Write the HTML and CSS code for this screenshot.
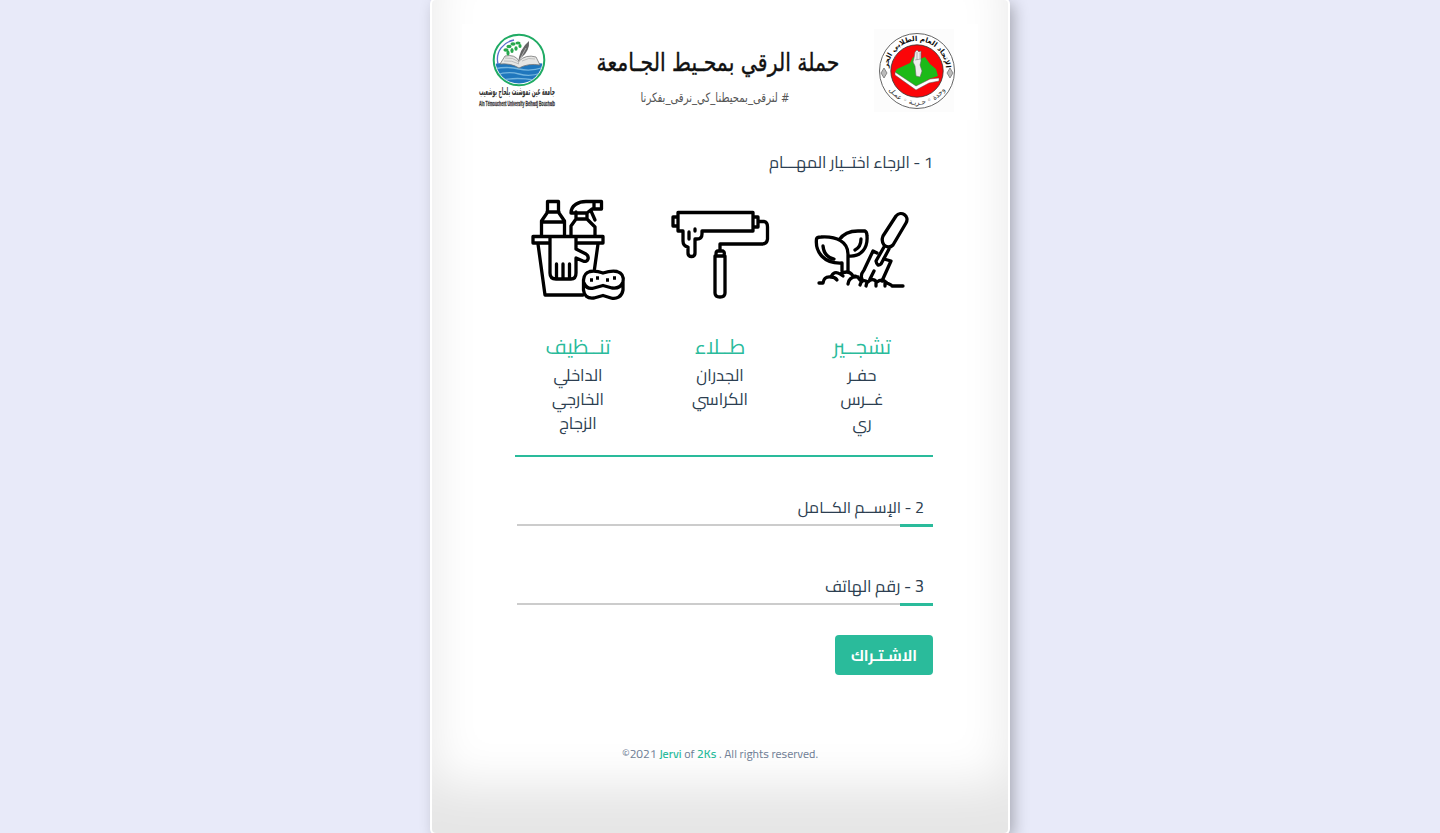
FILE: index.html
```html
<!DOCTYPE html>
<html lang="ar">
<head>
<meta charset="utf-8">
<title>حملة الرقي بمحيط الجامعة</title>
<link rel="stylesheet" href="styles.css">
</head>
<body>
<main class="card">
  <header class="banner">
    <svg class="banner-art" width="516" height="96" viewBox="462 24 516 96">
      <rect x="462" y="24" width="516" height="96" fill="#fff"/>
      <g>
        <clipPath id="seal"><circle cx="519" cy="60" r="23.6"/></clipPath>
        <circle cx="519" cy="60" r="25.3" fill="#fff" stroke="#20ab64" stroke-width="2"/>
        <g clip-path="url(#seal)">
          <path d="M494 64q14-3 25 2q12-5 26-2v23h-51z" fill="#1f77bd"/>
          <path d="M494 69q13-3 25 0t26-2M496 75q12-4 23-1t22-1M502 80q15-3 32 0" fill="none" stroke="#73b5df" stroke-width="1.3"/>
        </g>
        <path d="M498 64c-3-13 6-22 16-24" fill="none" stroke="#5c6dcc" stroke-width="1.3"/>
        <path d="M500 64l5-8q10-2 14 5q7-7 17-4l4 8q-12-2-21 3q-8-5-19-4z" fill="#e6e6e4" stroke="#777" stroke-width=".8"/>
        <path d="M505 58q8-1 14 4M504 61q8-1 15 3M522 61q7-4 13-2" fill="none" stroke="#aaa" stroke-width=".7"/>
        <path d="M518 64q1-15 11-23q1 10-8 17z" fill="#666"/><path d="M518 63l8-15" stroke="#ddd" stroke-width=".6"/>
        <g fill="#27a84d"><ellipse cx="506" cy="50" rx="2.6" ry="1.7"/><ellipse cx="509" cy="46.500" rx="2.6" ry="1.7"/><ellipse cx="513" cy="44" rx="2.6" ry="1.7"/><ellipse cx="518" cy="43" rx="2.6" ry="1.6"/><ellipse cx="508" cy="53" rx="1.6" ry="2.5"/><ellipse cx="512" cy="50.500" rx="1.6" ry="2.5"/><ellipse cx="516" cy="48.500" rx="1.6" ry="2.2"/><ellipse cx="520" cy="46" rx="1.6" ry="2"/></g>
        <text class="logo-ar" x="517" y="95" text-anchor="middle" textLength="76" lengthAdjust="spacingAndGlyphs" direction="rtl">جامعة عين تموشنت بلحاج بوشعيب</text>
        <text class="logo-en" x="517" y="106" text-anchor="middle" textLength="76" lengthAdjust="spacingAndGlyphs">Ain Témouchent University Belhadj Bouchaib</text>
      </g>
      <text class="title" x="718" y="71" text-anchor="middle" textLength="243" lengthAdjust="spacingAndGlyphs" direction="rtl">حملة الرقي بمحـيط الجـامعة</text>
      <text class="hashtag" x="715" y="102" text-anchor="middle" textLength="149" lengthAdjust="spacingAndGlyphs" direction="rtl"># لنرقى_بمحيطنا_كي_نرقى_بفكرنا</text>
      <g>
        <rect x="874" y="29" width="80" height="83" fill="#fcfcfc"/>
        <circle cx="917" cy="71" r="37.5" fill="#fff" stroke="#666" stroke-width="1"/>
        <circle cx="917" cy="71" r="26.2" fill="#fb0508" stroke="#333" stroke-width=".8"/>
        <path d="M895 72l2-3 13-6 3-6 7 2 5-2 5 7 6 5 2 7-9 3-13 9z" fill="#1cba18"/>
        <path d="M895 72l21 14 14-7 9-1v3l-10 2-13 7-21-15z" fill="#fff" stroke="#555" stroke-width=".5"/>
        <path d="M916 76l-1-10-2-4 1-4 1-6 2-2 2 2 2-1v10l-1 4 2 6-2 6z" fill="#eee" stroke="#666" stroke-width=".6"/>
        <path d="M915 60l6-1M917 52v8M920 53v6" stroke="#888" stroke-width=".6"/>
        <path id="arcTop" d="M888 70A29 29 0 0 1 946 70" fill="none"/>
        <path id="arcBottom" d="M884 79A34 34 0 0 0 950 79" fill="none"/>
        <text class="seal-top" direction="rtl" text-anchor="middle"><textPath href="#arcTop" startOffset="50%">الإتحاد العام الطلابي الحر</textPath></text>
        <text class="seal-bottom" direction="rtl" text-anchor="middle"><textPath href="#arcBottom" startOffset="50%">وحدة ◦ حـريـة ◦ عمـل</textPath></text>
        <path d="M881 73l3-5 3 5-3 5zM947 73l3-5 3 5-3 5z" fill="#bbb" stroke="#666" stroke-width=".7"/>
      </g>
    </svg>
  </header>

  <form class="form">
    <h1 class="question"><span class="fit" dir="rtl">1 - الرجاء اختــيار المهـــام</span></h1>
    <section class="tasks" dir="rtl">
      <article class="task">
        <svg class="icon" width="120" height="120" viewBox="802 190 120 120">
          <path d="M842 271V263C824 264 815 252 816.500 239Q817 237 821 237C837 236 848 242 848 254V271M839 240Q845 231 858 231H865Q867 232 867 236C868 248 861 257 849 256M823 246Q824 257 834 259M861 239Q861 247 855 250"/>
          <path d="M819 283H823Q824 276 831 277Q834 270 840 274Q849 269 853 276Q858 276 860 280M831 277Q835 277 837 280M840 274L843 276M848 284Q849 276 858 277M860 285Q862 278 868 282Q872 277 877 282Q882 278 887 283Q892 285 892 286H903M866 286L867 282M876 286V282M885 286V283"/>
          <path d="M862 279Q860 275 864 270L873 251L877 253M884 259L891 261L882 281M870 279L874 271"/>
          <path d="M883 236L896 216C901 210 910 216 906 223L893 245Q889 249 884 245Q881 241 883 236zM884 247L876 261Q877 267 881 264L889 249"/>
        </svg>
        <h2 class="task-name"><span class="fit">تشجــير</span></h2>
        <p class="task-items"><span class="fit">حفـر</span><br><span class="fit">غــرس</span><br><span class="fit">ري</span></p>
      </article>
      <article class="task">
        <svg class="icon" width="120" height="120" viewBox="660 190 120 120">
          <path d="M678 212.500H753V231H702V234Q702 239 697 239H695V253Q695 256.500 691.500 256.500T688 253V247Q683 246 683 241V231H678zM677 217H673V226H677M754 217H758V227H754M759 221.500H764Q767.500 222 767.500 227V239Q767 244 762 244H720V250M716 254Q716 251 718 251H723Q725 252 724 255M715 256H725V293Q725 297 720 297T715 293zM689 232V239M695 229V231"/>
        </svg>
        <h2 class="task-name"><span class="fit">طــلاء</span></h2>
        <p class="task-items"><span class="fit">الجدران</span><br><span class="fit">الكراسي</span></p>
      </article>
      <article class="task">
        <svg class="icon" width="120" height="120" viewBox="518 190 120 120">
          <path d="M547.500 211V201.500H558.500V211M547 212H559M547 213L541.500 221V235M559 213L564.500 221V235M542 222H564M576 212V219H587V214M576 219L571 226V235M587 219L595 227V235M571 213C571 205 579 201.500 586 201.500H601.500V209H592L587 213H571zM594 202V208M591 211L595 220"/>
          <path d="M548 243H533V236.500H603V243H578M538 244L545 295H583M598 244L594.500 269M550 238V273Q550 279 556 279H571Q576 279 576 273V258L583 261C588 263 590 257 586 254L576 249V238M556.500 264V278M563 264V278M569.500 264V278"/>
          <path d="M590 271.500Q596 270.500 603 273Q611 270.500 617 271.500C622 273 624 277 623 282V290C622 297 616 299.500 611 298L603 295.500L594 298C587 299 584 295 583.500 290V280Q584 273 590 271.500M584 283Q587 290 594 288L603 285.500L612 288Q620 289 622.500 283"/>
          <path class="dots" d="M590 280h3M596 278h3M606 280h3M613 278h3"/>
        </svg>
        <h2 class="task-name"><span class="fit">تنــظيف</span></h2>
        <p class="task-items"><span class="fit">الداخلي</span><br><span class="fit">الخارجي</span><br><span class="fit">الزجاج</span></p>
      </article>
    </section>
    <label class="field"><span class="fit" dir="rtl">2 - الإســم الكــامل</span></label>
    <label class="field phone"><span class="fit" dir="rtl">3 - رقم الهاتف</span></label>
    <button class="submit" type="button"><span class="fit" dir="rtl">الاشـتـراك</span></button>
  </form>
  <footer class="footer">©2021 <a>Jervi</a> of <a>2Ks</a> . All rights reserved.</footer>
</main>
</body>
</html>
```
FILE: styles.css
```css
* { box-sizing: border-box; }
body {
  margin: 0;
  height: 833px;
  overflow: hidden;
  background: #e8eaf9;
  color: #2c3e50;
  font: 16px/24px Cairo, "DejaVu Sans", sans-serif;
}
.card {
  width: 576px;
  height: 833px;
  margin: 0 auto;
  padding-top: 24px;
  background: #fff;
  border-radius: 4px;
  box-shadow: inset 0 -3em 3em rgba(0, 0, 0, .1), 0 0 0 2px #fff, .3em .3em 1em rgba(0, 0, 0, .3);
}
.banner { height: 96px; padding-left: 30px; }
.banner-art { display: block; }
.title { font: 25px "DejaVu Sans", sans-serif; fill: #111; stroke: #111; stroke-width: .4px; }
.hashtag { font: 13px "DejaVu Sans", sans-serif; fill: #555; }
.logo-ar { font: bold 11px "DejaVu Sans", sans-serif; fill: #333; }
.logo-en { font: bold 8px "Liberation Sans", sans-serif; fill: #333; stroke: #333; stroke-width: .3px; }
.seal-top { font: bold 7px "DejaVu Sans", sans-serif; fill: #111; }
.seal-bottom { font: 7px "DejaVu Sans", sans-serif; fill: #333; }
.form { width: 418px; margin: 33px 0 0 83px; }
.question { margin: 0; height: 37px; font-size: 16.2px; font-weight: 400; line-height: 18px; text-align: right; }
.fit { display: inline-block; white-space: nowrap; }
.tasks {
  display: flex;
  justify-content: space-between;
  height: 267px;
  padding: 0 11px 0 3px;
  border-bottom: 2px solid #2abb9b;
}
.task { width: 120px; text-align: center; }
.icon {
  display: block;
  fill: none;
  stroke: #000;
  stroke-width: 3.3;
  stroke-linecap: round;
  stroke-linejoin: round;
}
.dots { stroke-linecap: butt; }
.task-name { margin: 21px 0 0; color: #2abb9b; font-size: 20.6px; font-weight: 400; line-height: 32px; }
.task-items { margin: 0; font-size: 16.5px; }
.field {
  display: block;
  height: 38px;
  margin: 32px 0 0 2px;
  padding: 6px 9px 0 0;
  text-align: right;
  background: linear-gradient(#2abb9b, #2abb9b) right bottom / 33px 3px no-repeat,
    linear-gradient(#ccc, #ccc) 0 35px / 100% 2px no-repeat;
}
.field + .field { margin-top: 41px; }
.phone { font-size: 16.5px; }
.submit {
  display: block;
  width: 98px;
  height: 40px;
  margin: 29px 0 0 auto;
  padding: 1px 0 0;
  border: 0;
  border-radius: 4px;
  background: #2abb9b;
  color: #fff;
  font: bold 15.2px/24px Cairo, "DejaVu Sans", sans-serif;
}
.footer { margin-top: 71px; text-align: center; color: #718096; font: 12px/16px Cairo, "Open Sans", sans-serif; }
.footer a { color: #2abb9b; font-weight: 600; }
```
